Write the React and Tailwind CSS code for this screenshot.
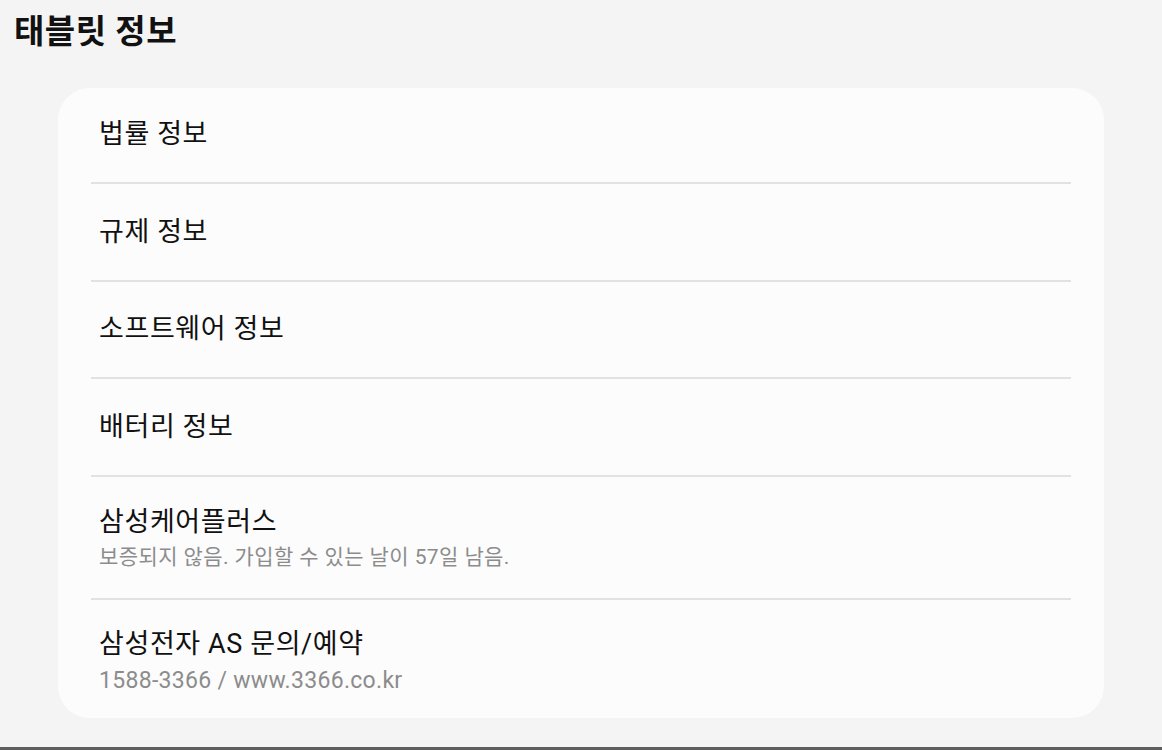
export default function App() {
  const items = [
    { title: "법률 정보" },
    { title: "규제 정보" },
    { title: "소프트웨어 정보" },
    { title: "배터리 정보" },
    { title: "삼성케어플러스", sub: "보증되지 않음. 가입할 수 있는 날이 57일 남음.", gap: "mt-[2px]" },
    { title: "삼성전자 AS 문의/예약", sub: "1588-3366 / www.3366.co.kr", gap: "mt-[4px]" },
  ];

  return (
    <div className="box-border h-[750px] w-full overflow-hidden border-b-[3px] border-[#5e5e5e] bg-[#f4f4f4] font-['Roboto','Noto_Sans_CJK_KR',sans-serif]">
      <h1 className="px-[14px] pt-[14px] text-[33px] font-bold leading-[36px] tracking-[0.5px] text-[#111]">
        태블릿 정보
      </h1>

      {/* 목록 카드 */}
      <div className="mx-[58px] mt-[38px] w-[1046px] rounded-[32px] bg-[#fcfcfc] px-[33px]">
        {items.map((item, i) => {
          const last = i === items.length - 1;
          const height = item.sub
            ? last
              ? "h-[118px] pt-[6px]"
              : "h-[123px] pt-[3px]"
            : i === 0
              ? "h-[96px] pb-[2px]"
              : "h-[97.5px]";
          return (
            <div
              key={item.title}
              className={`flex flex-col justify-center px-[8px] ${height} ${
                last ? "" : "border-b-2 border-[#e2e2e2]"
              }`}
            >
              <p className="text-[27px] leading-[34px] tracking-[0.6px] text-[#111]">{item.title}</p>
              {item.sub && (
                <p className={`${item.gap} text-[21px] leading-[32px] tracking-[0.4px] text-[#8c8c8c]`}>
                  {last ? <span className="text-[23px] tracking-[0.3px]">{item.sub}</span> : item.sub}
                </p>
              )}
            </div>
          );
        })}
      </div>
    </div>
  );
}
